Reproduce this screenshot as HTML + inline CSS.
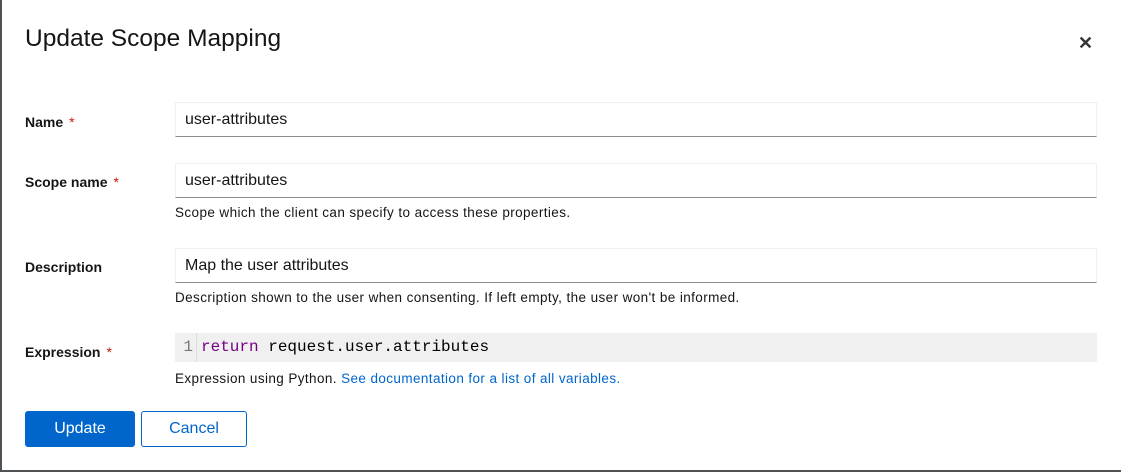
<!DOCTYPE html>
<html><head><style>
*{box-sizing:border-box;margin:0;padding:0}
body{width:1121px;height:472px;background:#4f5255;font-family:"Liberation Sans",sans-serif;overflow:hidden;position:relative}
.m{position:absolute;left:2px;top:0;width:1119px;height:470px;background:#fff}
.t{position:absolute;left:23px;top:25px;font-size:24.5px;color:#151515}
.x{position:absolute;left:1076px;top:33px;font-size:18px;font-weight:bold;color:#333}
.l{position:absolute;left:23px;font-size:14px;font-weight:bold;color:#151515}
.l span{color:#c9190b;margin-left:6px;font-weight:normal}
.i{position:absolute;left:173px;width:922px;height:35px;border:1px solid #f0f0f0;border-bottom-color:#8a8d90;padding:0 9px;font-size:16px;line-height:33px;color:#151515}
.h{position:absolute;left:173px;font-size:13.5px;letter-spacing:0.4px;color:#151515}
.h a{color:#06c;text-decoration:none}
.c{position:absolute;left:173px;top:333px;width:922px;height:29px;background:#f0f0f0;font-family:"Liberation Mono",monospace;font-size:16px;line-height:29px}
.c .n{display:inline-block;width:22px;text-align:right;color:#777;border-right:1px solid #ddd;padding-right:3px;margin-right:4px}
.b{position:absolute;top:411px;height:36px;border-radius:3px;font-size:16px;line-height:34px;text-align:center}
</style></head><body><div class="m">
<div class="t">Update Scope Mapping</div>
<div class="x">✕</div>
<div class="l" style="top:114px">Name<span>*</span></div>
<div class="i" style="top:102px">user-attributes</div>
<div class="l" style="top:174px">Scope name<span>*</span></div>
<div class="i" style="top:163px">user-attributes</div>
<div class="h" style="top:205px">Scope which the client can specify to access these properties.</div>
<div class="l" style="top:259px">Description</div>
<div class="i" style="top:248px">Map the user attributes</div>
<div class="h" style="top:290px">Description shown to the user when consenting. If left empty, the user won't be informed.</div>
<div class="l" style="top:344px">Expression<span>*</span></div>
<div class="c"><span class="n">1</span><span style="color:#708">return</span> request.user.attributes</div>
<div class="h" style="top:371px">Expression using Python. <a>See documentation for a list of all variables.</a></div>
<div class="b" style="left:23px;width:110px;background:#06c;color:#fff;border:1px solid #06c">Update</div>
<div class="b" style="left:139px;width:106px;border:1px solid #06c;color:#06c">Cancel</div>
</div></body></html>
